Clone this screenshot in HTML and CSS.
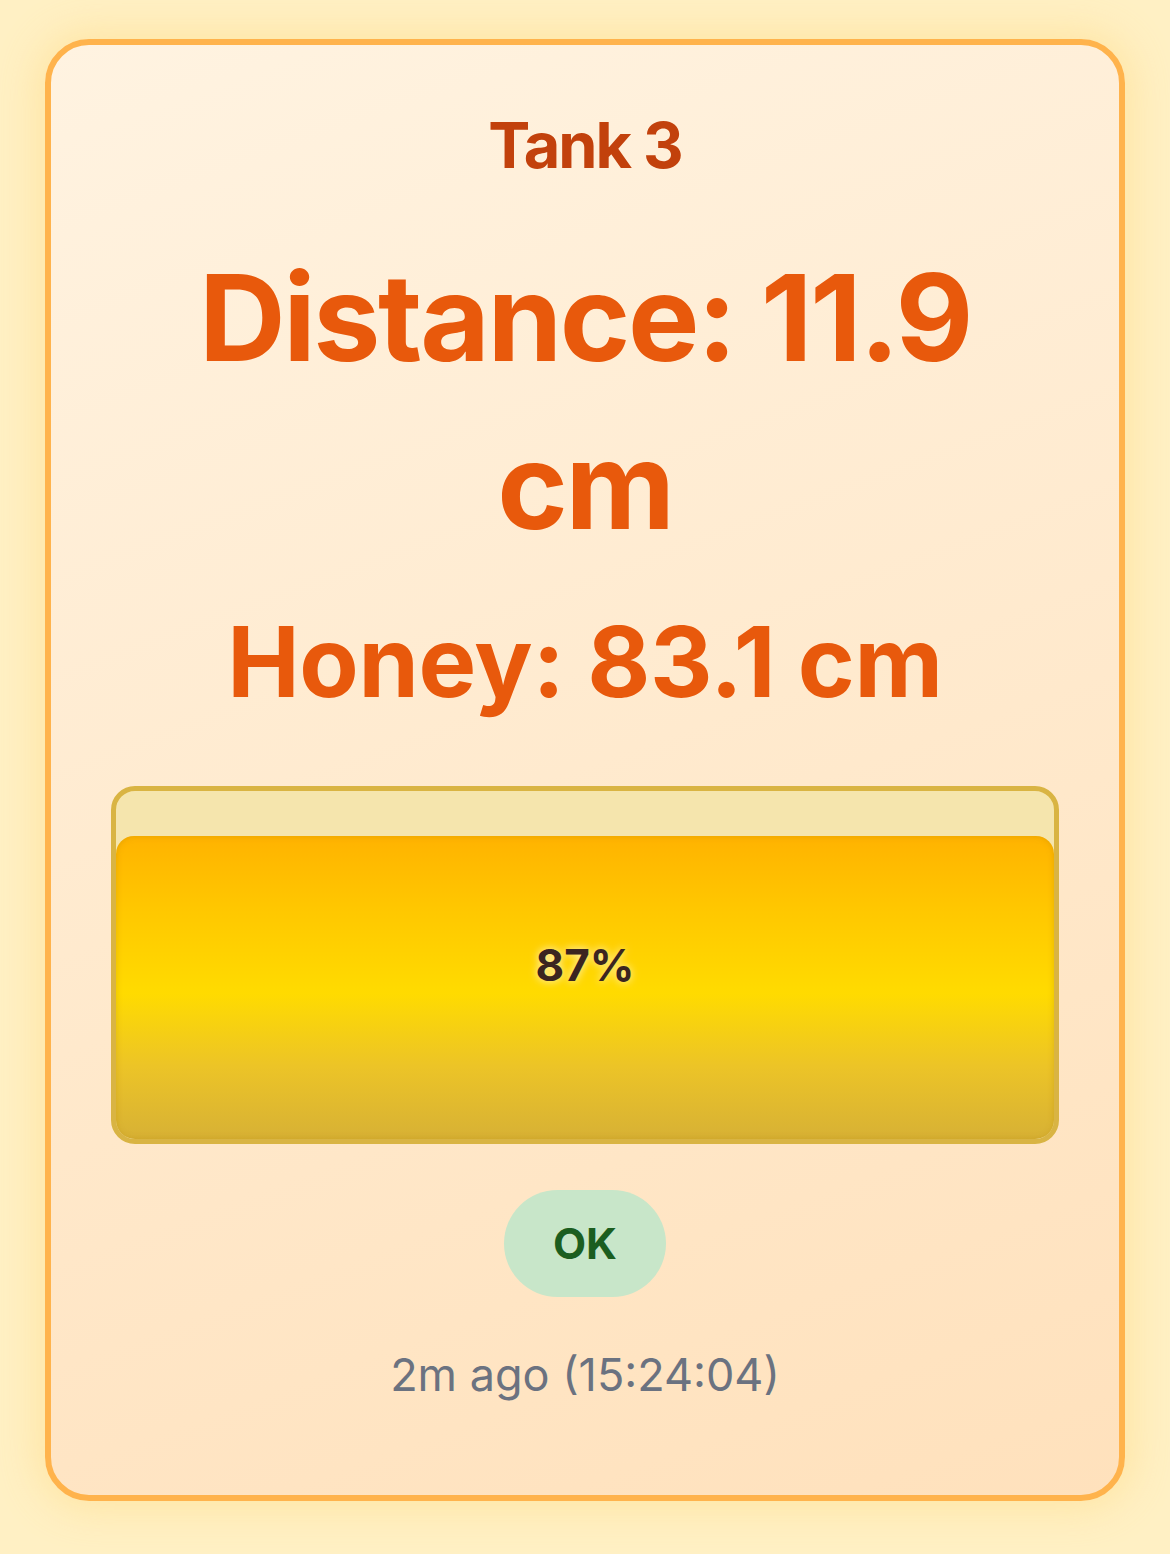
FILE: index.html
```html
<!DOCTYPE html>
<html lang="en">
<head>
<meta charset="utf-8">
<title>Tank 3</title>
<link rel="stylesheet" href="styles.css">
</head>
<body>
<main class="page">
  <section class="card">
    <h2 class="tank-name">Tank 3</h2>
    <div class="distance">Distance: 11.9 cm</div>
    <div class="honey">Honey: 83.1 cm</div>
    <div class="tank-bar">
      <div class="tank-fill" style="height: 87%;"></div>
      <span class="tank-pct">87%</span>
    </div>
    <div class="status-row"><span class="status ok">OK</span></div>
    <div class="updated">2m ago (15:24:04)</div>
  </section>
</main>
</body>
</html>
```
FILE: styles.css
```css
* { box-sizing: border-box; }
html, body { margin: 0; padding: 0; }
body {
  width: 1170px;
  height: 1554px;
  background: #fff0c4;
  font-family: Inter, "Noto Sans", "Liberation Sans", sans-serif;
  overflow: hidden;
}
.page {
  padding: 39px 45px;
}
.card {
  height: 1462px;
  border: 6px solid #ffb34c;
  border-radius: 44px;
  background: linear-gradient(160deg, #fff3e1 0%, #ffe9cc 55%, #ffe1bc 100%);
  box-shadow: 0 0 40px 6px rgba(255, 214, 120, 0.45);
  padding: 60px 60px 0;
  display: flex;
  flex-direction: column;
  align-items: stretch;
  text-align: center;
}
.tank-name {
  margin: 0;
  font-size: 63px;
  line-height: 80px;
  font-weight: 700;
  color: #c2410c;
  letter-spacing: -2px;
}
.distance {
  margin-top: 49px;
  font-size: 120px;
  line-height: 168px;
  font-weight: 700;
  color: #e8590c;
  letter-spacing: -2.4px;
  padding: 0 60px;
}
.honey {
  margin-top: 25px;
  font-size: 97px;
  line-height: 134px;
  font-weight: 700;
  color: #e8590c;
  letter-spacing: -0.3px;
}
.tank-bar {
  margin-top: 57px;
  height: 358px;
  border: 5px solid #d9b443;
  border-radius: 24px;
  background: #f5e5ad;
  display: grid;
  grid-template: 1fr / 1fr;
  overflow: hidden;
}
.tank-fill {
  grid-area: 1 / 1;
  align-self: end;
  border-radius: 18px 18px 16px 16px;
  background: linear-gradient(180deg, #ffb300 0%, #ffc800 25%, #ffdb00 52%, #ecc427 76%, #d7b135 100%);
  box-shadow: inset 0 0 6px rgba(180, 130, 0, 0.35);
}
.tank-pct {
  grid-area: 1 / 1;
  align-self: center;
  justify-self: center;
  font-size: 44px;
  font-weight: 700;
  color: #3b2520;
  text-shadow: 0 0 8px rgba(255, 255, 255, 0.8);
}
.status-row {
  margin-top: 46px;
  display: flex;
  justify-content: center;
}
.status {
  display: inline-block;
  padding: 26px 49px;
  border-radius: 60px;
  font-size: 43px;
  line-height: 55px;
  font-weight: 700;
}
.status.ok {
  background: #c8e6c9;
  color: #1b5e20;
}
.updated {
  margin-top: 44px;
  font-size: 45px;
  line-height: 67px;
  color: #6b7280;
}
```
